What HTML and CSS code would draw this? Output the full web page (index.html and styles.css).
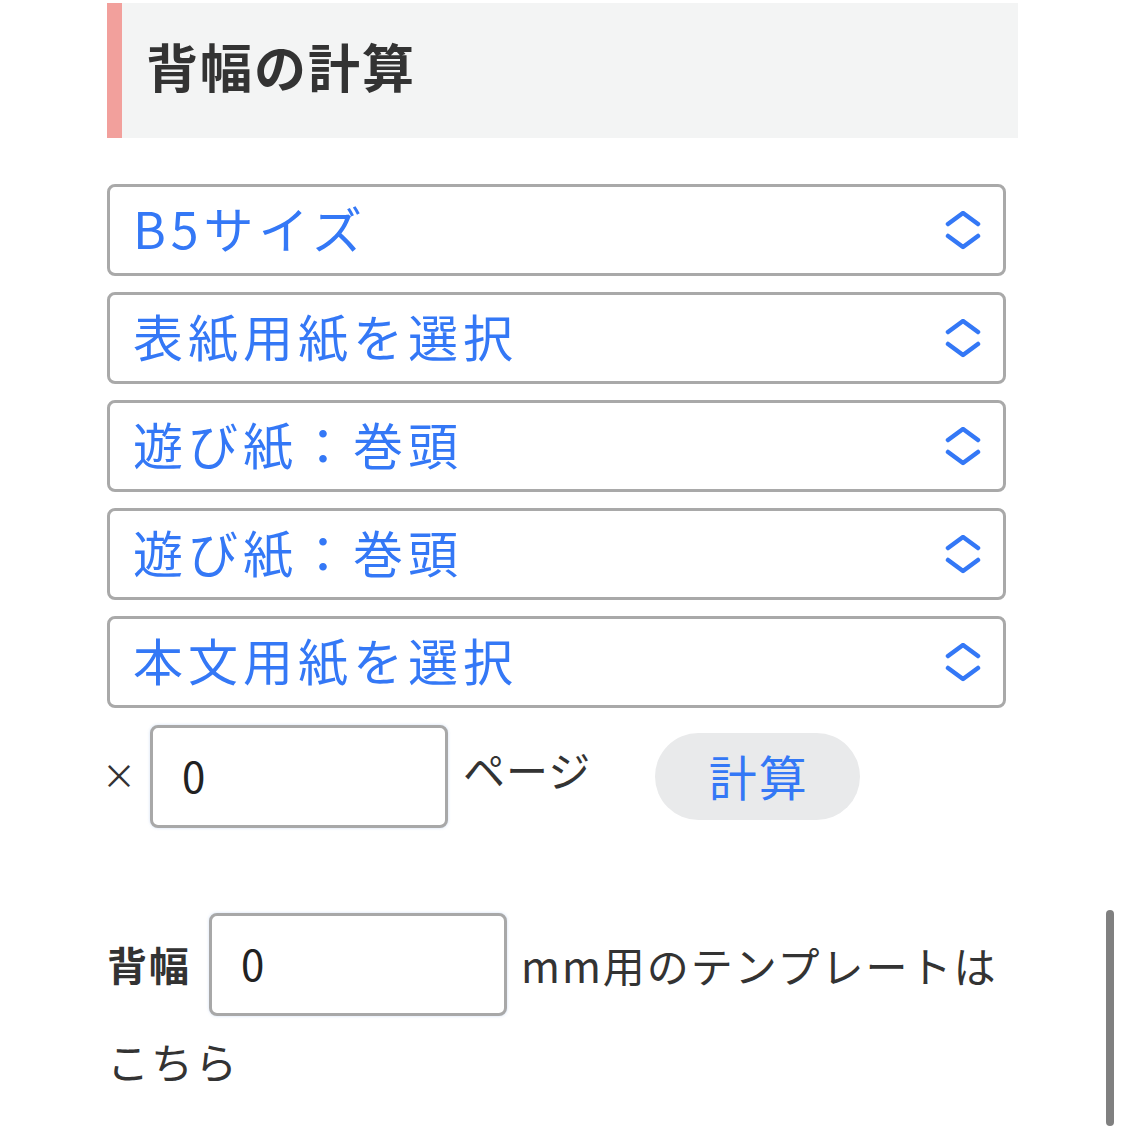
FILE: index.html
```html
<!DOCTYPE html>
<html lang="ja">
<head>
<meta charset="utf-8">
<title>背幅の計算</title>
<link rel="stylesheet" href="styles.css">
</head>
<body>
<main class="page">
  <h2 class="heading">背幅の計算</h2>

  <div class="selects">
    <div class="select-wrap">
      <select class="select"><option>B5サイズ</option></select>
      <svg class="chevron" viewBox="0 0 36 40" width="36" height="40"><path d="M3 13 L18 2 L33 13 M3 25 L18 36 L33 25" fill="none" stroke="#3478f6" stroke-width="4.5" stroke-linecap="round" stroke-linejoin="round"/></svg>
    </div>
    <div class="select-wrap">
      <select class="select"><option>表紙用紙を選択</option></select>
      <svg class="chevron" viewBox="0 0 36 40" width="36" height="40"><path d="M3 13 L18 2 L33 13 M3 25 L18 36 L33 25" fill="none" stroke="#3478f6" stroke-width="4.5" stroke-linecap="round" stroke-linejoin="round"/></svg>
    </div>
    <div class="select-wrap">
      <select class="select"><option>遊び紙：巻頭</option></select>
      <svg class="chevron" viewBox="0 0 36 40" width="36" height="40"><path d="M3 13 L18 2 L33 13 M3 25 L18 36 L33 25" fill="none" stroke="#3478f6" stroke-width="4.5" stroke-linecap="round" stroke-linejoin="round"/></svg>
    </div>
    <div class="select-wrap">
      <select class="select"><option>遊び紙：巻頭</option></select>
      <svg class="chevron" viewBox="0 0 36 40" width="36" height="40"><path d="M3 13 L18 2 L33 13 M3 25 L18 36 L33 25" fill="none" stroke="#3478f6" stroke-width="4.5" stroke-linecap="round" stroke-linejoin="round"/></svg>
    </div>
    <div class="select-wrap">
      <select class="select"><option>本文用紙を選択</option></select>
      <svg class="chevron" viewBox="0 0 36 40" width="36" height="40"><path d="M3 13 L18 2 L33 13 M3 25 L18 36 L33 25" fill="none" stroke="#3478f6" stroke-width="4.5" stroke-linecap="round" stroke-linejoin="round"/></svg>
    </div>
  </div>

  <div class="calc-row">
    <span class="times">×</span>
    <input class="num-input" type="text" value="0">
    <span class="unit">ページ</span>
    <button class="calc-btn" type="button">計算</button>
  </div>

  <p class="result"><strong class="result-label">背幅</strong><input class="num-input result-input" type="text" value="0"><span class="result-text">mm用のテンプレートは</span><span class="result-text">こちら</span></p>
</main>
<div class="scrollbar"></div>
</body>
</html>
```

FILE: styles.css
```css
html, body {
  margin: 0;
  padding: 0;
  background: #ffffff;
}

body {
  font-family: "Noto Sans CJK JP", "Noto Sans", sans-serif;
  color: #333333;
  width: 1125px;
  height: 1128px;
  overflow: hidden;
  position: relative;
}

.page {
  padding: 3px 0 0 107px;
  width: 911px;
}

.heading {
  margin: 0;
  height: 135px;
  box-sizing: border-box;
  border-left: 15px solid #f2a09c;
  background: #f3f4f4;
  padding: 0 0 10px 24px;
  display: flex;
  align-items: center;
  font-size: 52px;
  font-weight: 700;
  letter-spacing: 2px;
  color: #333333;
}

.selects {
  margin-top: 46px;
  display: flex;
  flex-direction: column;
  gap: 16px;
  width: 899px;
}

.select-wrap {
  position: relative;
  height: 92px;
}

.select {
  appearance: none;
  -webkit-appearance: none;
  width: 100%;
  height: 92px;
  box-sizing: border-box;
  border: 3px solid #a9a9a9;
  border-radius: 8px;
  background: #ffffff;
  padding: 0 0 6px 23px;
  font-family: "Noto Sans CJK JP", "Noto Sans", sans-serif;
  font-size: 50px;
  letter-spacing: 5px;
  color: #3478f6;
  outline: none;
}

.chevron {
  position: absolute;
  right: 25px;
  top: 27px;
  pointer-events: none;
}

.calc-row {
  margin-top: 17px;
  display: flex;
  align-items: center;
}

.times {
  font-size: 34px;
  width: 43px;
  margin-left: -5px;
  padding-right: 5px;
  color: #333333;
  line-height: 1;
  margin-top: -4px;
}

.num-input {
  width: 298px;
  height: 103px;
  box-sizing: border-box;
  border: 3px solid #a8a8a8;
  border-radius: 8px;
  background: #ffffff;
  box-shadow: 0 0 3px rgba(120, 160, 220, 0.35);
  padding: 0 0 4px 29px;
  font-family: "Noto Sans CJK JP", "Noto Sans", sans-serif;
  font-size: 42px;
  color: #222222;
  outline: none;
  margin: 0;
}

.unit {
  margin-left: 15px;
  font-size: 42px;
  letter-spacing: 1px;
  margin-top: -16px;
}

.calc-btn {
  margin-left: 64px;
  width: 205px;
  height: 87px;
  border: none;
  border-radius: 44px;
  background: #e9eaeb;
  color: #3478f6;
  font-family: "Noto Sans CJK JP", "Noto Sans", sans-serif;
  font-size: 48px;
  letter-spacing: 2px;
  padding: 0 0 4px 2px;
}

.result {
  margin: 85px 0 0 0;
  width: 911px;
  font-size: 42px;
  line-height: 75px;
  letter-spacing: 2px;
}

.result-label {
  font-size: 40px;
  font-weight: 700;
  letter-spacing: 2px;
  margin-right: 18px;
  vertical-align: middle;
}

.result-input {
  vertical-align: middle;
  margin-right: 14px;
  letter-spacing: 0;
}

.result-text {
  vertical-align: middle;
}

.scrollbar {
  position: absolute;
  left: 1106px;
  top: 910px;
  width: 8px;
  height: 216px;
  border-radius: 4px;
  background: #808080;
}
```
